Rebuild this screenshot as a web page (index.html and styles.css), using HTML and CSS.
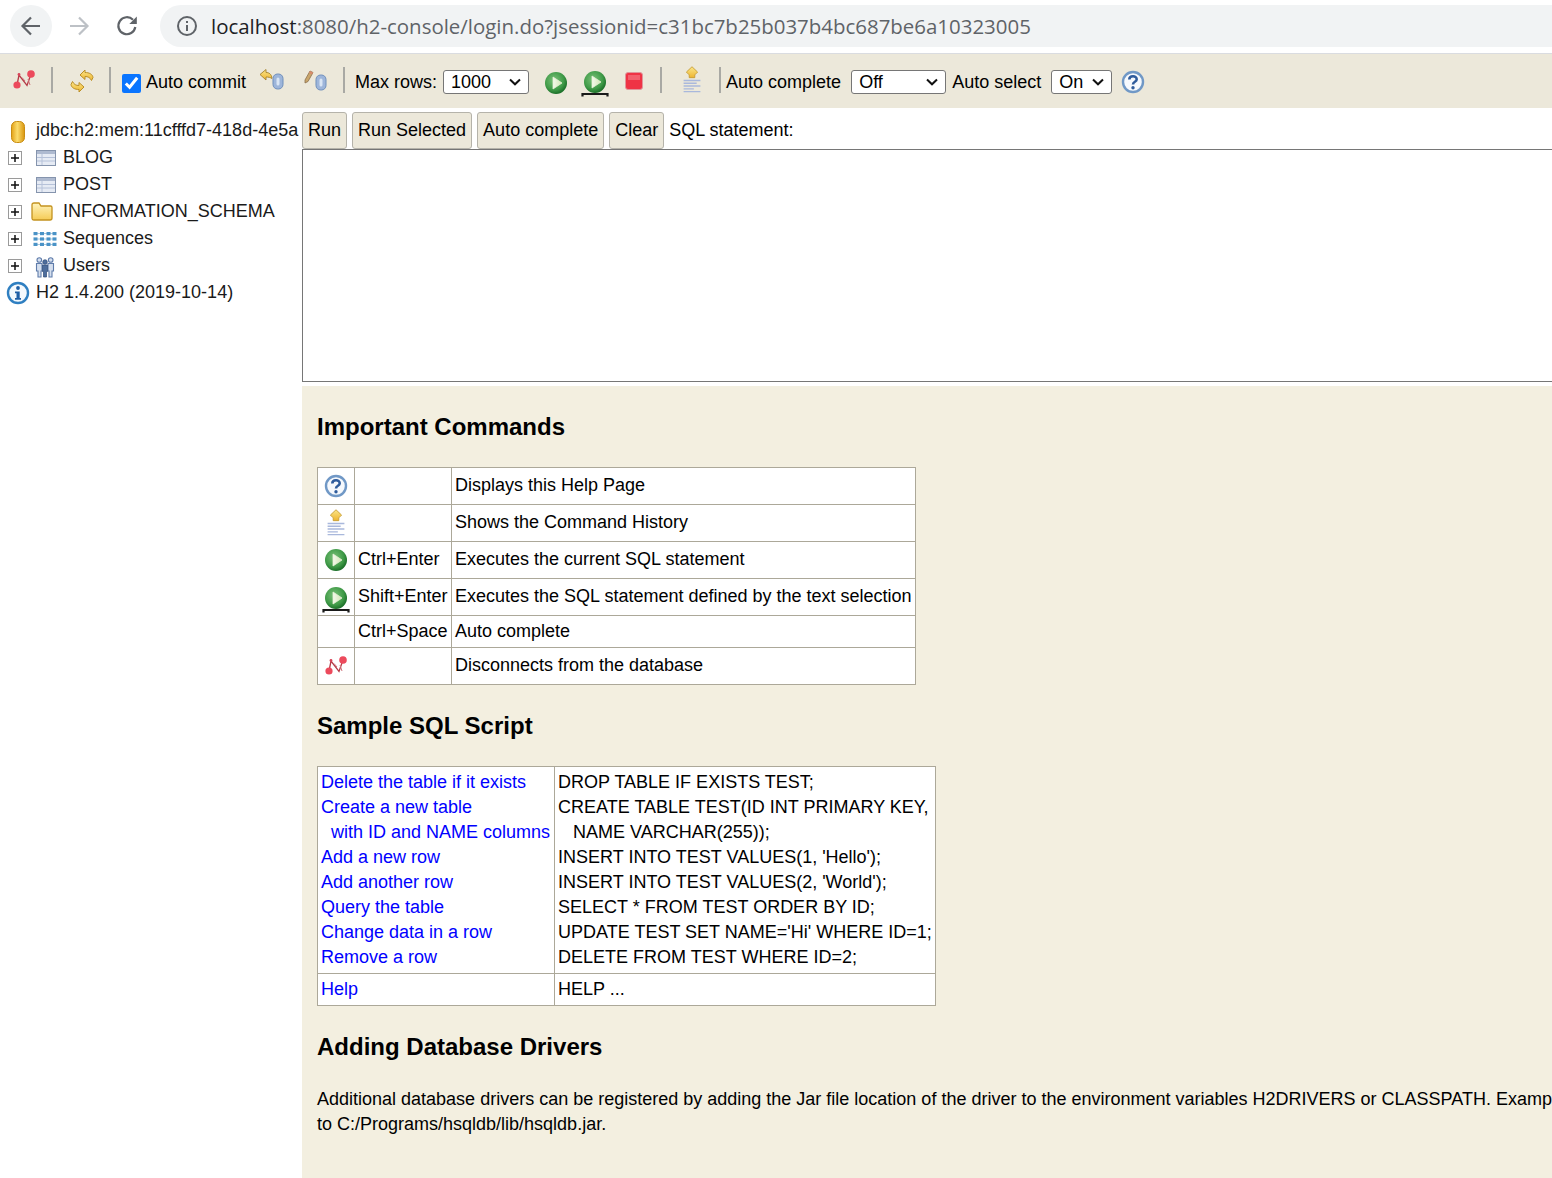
FILE: index.html
```html
<!DOCTYPE html>
<html lang="en">
<head>
<meta charset="utf-8">
<title>H2 Console</title>
<link rel="stylesheet" href="styles.css">
</head>
<body>
<svg class="defs" width="0" height="0" aria-hidden="true">
  <defs>
    <radialGradient id="gr" cx="42%" cy="38%" r="62%"><stop offset="0" stop-color="#7cc27a"/><stop offset=".7" stop-color="#3f9a47"/><stop offset="1" stop-color="#1c7029"/></radialGradient>
    <linearGradient id="tri" x1="0" x2="1" y1="0" y2="0"><stop offset="0" stop-color="#f5f9ec"/><stop offset="1" stop-color="#d2e6b4"/></linearGradient>
    <linearGradient id="cyl" x1="0" x2="1" y1="0" y2="0"><stop offset="0" stop-color="#e3a217"/><stop offset=".45" stop-color="#fbdc6c"/><stop offset="1" stop-color="#d9960f"/></linearGradient>
    <linearGradient id="fold" x1="0" x2="0" y1="0" y2="1"><stop offset="0" stop-color="#fff4bd"/><stop offset="1" stop-color="#f5cb55"/></linearGradient>
    <linearGradient id="gold" x1="0" x2="0" y1="0" y2="1"><stop offset="0" stop-color="#fbe68a"/><stop offset="1" stop-color="#eeb52f"/></linearGradient>
    <symbol id="i-disc" viewBox="0 0 24 24">
      <path d="M4 17 L6 7 L14 17.500 L18 6" fill="none" stroke="#b53a46" stroke-width="1.300"/>
      <path d="M9 9.500 L12 13 M15 11 L17 17" fill="none" stroke="#d0737c" stroke-width="1"/>
      <circle cx="4" cy="17" r="3.600" fill="#ec4a5c"/><circle cx="18" cy="6" r="3.800" fill="#ec4a5c"/><circle cx="6" cy="6.500" r="1.400" fill="#d8465a"/>
    </symbol>
    <symbol id="i-refresh" viewBox="0 0 24 24">
      <path d="M10 6 L15 1 V3.500 C19 3.500 22.500 5 23 8.500 L21.500 11.500 C20 8.500 18 7.500 15 7.500 V10.500 Z" fill="url(#gold)" stroke="#bb8f28" stroke-width="1"/>
      <path d="M14 18 L9 23 V20.500 C5 20.500 1.500 19 1 15.500 L2.500 12.500 C4 15.500 6 16.500 9 16.500 V13.500 Z" fill="url(#gold)" stroke="#bb8f28" stroke-width="1"/>
    </symbol>
    <symbol id="i-rollback" viewBox="0 0 26 22">
      <path d="M1 5.500 L7 .5 V3.500 C10 3.500 12.500 5 13 9.500 C11.500 8.500 9.500 8 7 8 V11 Z" fill="url(#gold)" stroke="#a5822c" stroke-width=".9"/>
      <rect x="14" y="5" width="10" height="15" rx="4.500" fill="#9db5da" stroke="#6f8fbb"/><rect x="17.500" y="8.500" width="3" height="8" rx="1.500" fill="#d9e5f4"/>
    </symbol>
    <symbol id="i-commit" viewBox="0 0 26 22">
      <path d="M2 10 L7 1 L10 2.500 L5 11.500 L2 13 Z" fill="#c9a66b" stroke="#8a6f4c" stroke-width=".8"/>
      <path d="M7 1 L10 2.500 L9 4.500 L6 3 Z" fill="#d98a6b"/>
      <rect x="13" y="5" width="10" height="15" rx="4.500" fill="#9db5da" stroke="#6f8fbb"/><rect x="16.500" y="8.500" width="3" height="8" rx="1.500" fill="#d9e5f4"/>
    </symbol>
    <symbol id="i-run" viewBox="0 0 24 24">
      <circle cx="12" cy="12" r="11" fill="url(#gr)"/>
      <path d="M9 6 L18 12 L9 18 Z" fill="url(#tri)" stroke="#e6f0d6" stroke-width=".8"/>
    </symbol>
    <symbol id="i-runsel" viewBox="0 0 28 28">
      <circle cx="14" cy="12" r="11" fill="url(#gr)"/>
      <path d="M11 6 L20 12 L11 18 Z" fill="url(#tri)" stroke="#e6f0d6" stroke-width=".8"/>
      <path d="M1.500 26.500 V24 H26.500 V26.500" fill="none" stroke="#1a1a1a" stroke-width="2.200"/>
    </symbol>
    <symbol id="i-stop" viewBox="0 0 18 18">
      <rect x=".5" y=".5" width="17" height="17" rx="2.500" fill="#ef3345" stroke="#e0969c"/>
      <rect x="3" y="3" width="12" height="5" fill="#f3606d"/>
    </symbol>
    <symbol id="i-hist" viewBox="0 0 20 30">
      <path d="M10 .8 L16 6.500 L13 9.500 V12.500 H7 V9.500 L4 6.500 Z" fill="url(#gold)" stroke="#c39a30" stroke-width=".9"/>
      <path d="M1 15.500 H19 M1 18.500 H15 M1 21.500 H19 M1 24.500 H12 M1 27.500 H19" stroke="#a9b8dc" stroke-width="1.500" fill="none"/>
    </symbol>
    <symbol id="i-help" viewBox="0 0 24 24">
      <circle cx="12" cy="12" r="10" fill="#f6f9fd" stroke="#7098c6" stroke-width="2.400"/>
      <path d="M8.300 9.500 C8.300 5.300 15.700 5.300 15.700 9.300 C15.700 12 12 11.500 12 14.500" fill="none" stroke="#2f5c9c" stroke-width="2.600"/>
      <circle cx="12" cy="17.800" r="1.700" fill="#2f5c9c"/>
    </symbol>
    <symbol id="i-db" viewBox="0 0 16 24">
      <rect x="1.500" y="1.500" width="13" height="21" rx="5" fill="url(#cyl)" stroke="#c98d12"/>
    </symbol>
    <symbol id="i-plus" viewBox="0 0 14 14">
      <rect x=".5" y=".5" width="13" height="13" fill="#fff" stroke="#9a9a9a"/>
      <path d="M3 7 H11 M7 3 V11" stroke="#111" stroke-width="1.500"/>
    </symbol>
    <symbol id="i-table" viewBox="0 0 20 16">
      <rect x=".5" y=".5" width="19" height="15" fill="#e6ebf4" stroke="#8594ad"/>
      <rect x="1" y="1" width="18" height="3" fill="#aebad0"/>
      <path d="M6 4 V15 M1 7.500 H19 M1 11 H19" stroke="#b6c2d9" stroke-width="1"/>
    </symbol>
    <symbol id="i-folder" viewBox="0 0 22 19">
      <path d="M1 16 V3 Q1 1 3 1 H8 L10 4 H19.500 Q21 4 21 5.500 V16 Q21 18 19 18 H3 Q1 18 1 16 Z" fill="url(#fold)" stroke="#c4931f" stroke-width="1.300"/>
    </symbol>
    <symbol id="i-seq" viewBox="0 0 24 16">
      <path d="M3 2.500 H21 M3 8 H21 M3 13.500 H21" stroke="#a8c8de" stroke-width="1"/>
      <g fill="#4a93c7"><rect x="0.500" y="1" width="4" height="3.200"/><rect x="7" y="1" width="4" height="3.200"/><rect x="13.500" y="1" width="4" height="3.200"/><rect x="19.500" y="1" width="4" height="3.200"/><rect x="0.500" y="6.400" width="4" height="3.200"/><rect x="7" y="6.400" width="4" height="3.200"/><rect x="13.500" y="6.400" width="4" height="3.200"/><rect x="19.500" y="6.400" width="4" height="3.200"/><rect x="0.500" y="11.800" width="4" height="3.200"/><rect x="7" y="11.800" width="4" height="3.200"/><rect x="13.500" y="11.800" width="4" height="3.200"/><rect x="19.500" y="11.800" width="4" height="3.200"/></g>
    </symbol>
    <symbol id="i-users" viewBox="0 0 20 22">
      <g fill="#d5dfee" stroke="#5f7cab" stroke-width="1.100"><circle cx="4.300" cy="4" r="2.300"/><circle cx="15.700" cy="4" r="2.300"/><path d="M1.500 7.500 H7 V15 H6 V21 H3 V15 H1.500 Z"/><path d="M13 7.500 H18.500 V15 H17 V21 H14 V15 H13 Z"/></g>
      <g fill="#4d6d9c" stroke="#2f4c78" stroke-width=".7"><circle cx="10" cy="6" r="2.300"/><path d="M7.500 9 H12.500 V15.500 H11.500 V21 H8.500 V15.500 H7.500 Z"/></g>
    </symbol>
    <symbol id="i-info" viewBox="0 0 24 24">
      <circle cx="12" cy="12" r="10" fill="#f4f9fd" stroke="#2f7fc1" stroke-width="2.400"/>
      <circle cx="12" cy="7" r="1.900" fill="#1f5fa5"/>
      <path d="M9 10.500 H13.700 V17 H15 V18.800 H9 V17 H10.500 V12.300 H9 Z" fill="#1f5fa5"/>
    </symbol>
  </defs>
</svg>

<header class="browser">
  <button class="nav-btn nav-back" type="button" aria-label="Back">
    <svg width="24" height="24" viewBox="0 0 24 24"><path d="M21 12 H4 M12 3.500 L3.500 12 L12 20.500" fill="none" stroke="#5f6368" stroke-width="2.200"/></svg>
  </button>
  <button class="nav-btn" type="button" aria-label="Forward">
    <svg width="24" height="24" viewBox="0 0 24 24"><path d="M3 12 H20 M12 3.500 L20.500 12 L12 20.500" fill="none" stroke="#bdc1c6" stroke-width="2.200"/></svg>
  </button>
  <button class="nav-btn" type="button" aria-label="Reload">
    <svg width="24" height="24" viewBox="0 0 24 24"><path d="M20.300 13 A8.500 8.500 0 1 1 18 5.800" fill="none" stroke="#5f6368" stroke-width="2.200"/><path d="M21.800 2.500 V10 H14.300 Z" fill="#5f6368"/></svg>
  </button>
  <div class="omnibox">
    <svg class="omni-info" width="22" height="22" viewBox="0 0 22 22"><circle cx="11" cy="11" r="9" fill="none" stroke="#5f6368" stroke-width="2"/><rect x="10" y="10" width="2" height="6" fill="#5f6368"/><rect x="10" y="6" width="2" height="2" fill="#5f6368"/></svg>
    <span class="url"><span class="url-host">localhost</span>:8080/h2-console/login.do?jsessionid=c31bc7b25b037b4bc687be6a10323005</span>
  </div>
</header>

<nav class="toolbar">
  <svg class="ico tb-disc"><use href="#i-disc"/></svg>
  <span class="sep sep-a"></span>
  <svg class="ico tb-refresh"><use href="#i-refresh"/></svg>
  <span class="sep sep-b"></span>
  <label class="check"><input type="checkbox" checked>Auto commit</label>
  <svg class="ico tb-rollback"><use href="#i-rollback"/></svg>
  <svg class="ico tb-commit"><use href="#i-commit"/></svg>
  <span class="sep sep-c"></span>
  <span class="lbl">Max rows:</span>
  <select class="sel sel-rows"><option>1000</option></select>
  <svg class="ico tb-run"><use href="#i-run"/></svg>
  <svg class="ico tb-runsel"><use href="#i-runsel"/></svg>
  <svg class="ico tb-stop"><use href="#i-stop"/></svg>
  <span class="sep sep-d"></span>
  <svg class="ico tb-hist"><use href="#i-hist"/></svg>
  <span class="sep sep-e"></span>
  <span class="lbl lbl-ac">Auto complete</span>
  <select class="sel sel-ac"><option>Off</option></select>
  <span class="lbl lbl-as">Auto select</span>
  <select class="sel sel-as"><option>On</option></select>
  <svg class="ico tb-help"><use href="#i-help"/></svg>
</nav>

<div class="main">
  <aside class="tree">
    <div class="node"><svg class="ico n-db"><use href="#i-db"/></svg><span class="n-root">jdbc:h2:mem:11cfffd7-418d-4e5a</span></div>
    <div class="node"><svg class="ico n-plus"><use href="#i-plus"/></svg><span class="n-slot"><svg class="ico n-table"><use href="#i-table"/></svg></span><span>BLOG</span></div>
    <div class="node"><svg class="ico n-plus"><use href="#i-plus"/></svg><span class="n-slot"><svg class="ico n-table"><use href="#i-table"/></svg></span><span>POST</span></div>
    <div class="node"><svg class="ico n-plus"><use href="#i-plus"/></svg><span class="n-slot"><svg class="ico n-folder"><use href="#i-folder"/></svg></span><span>INFORMATION_SCHEMA</span></div>
    <div class="node"><svg class="ico n-plus"><use href="#i-plus"/></svg><span class="n-slot"><svg class="ico n-seq"><use href="#i-seq"/></svg></span><span>Sequences</span></div>
    <div class="node"><svg class="ico n-plus"><use href="#i-plus"/></svg><span class="n-slot"><svg class="ico n-users"><use href="#i-users"/></svg></span><span>Users</span></div>
    <div class="node"><svg class="ico n-info"><use href="#i-info"/></svg><span class="n-root">H2 1.4.200 (2019-10-14)</span></div>
  </aside>

  <main class="content">
    <div class="query-bar">
      <button class="btn" type="button">Run</button>
      <button class="btn" type="button">Run Selected</button>
      <button class="btn" type="button">Auto complete</button>
      <button class="btn" type="button">Clear</button>
      <span class="q-label">SQL statement:</span>
    </div>
    <div class="editor"></div>
    <section class="help">
      <h3 class="h-first">Important Commands</h3>
      <table class="grid cmd">
        <tr class="r37"><td class="c-ico"><svg class="ico t-help"><use href="#i-help"/></svg></td><td class="c-key"></td><td>Displays this Help Page</td></tr>
        <tr class="r37"><td class="c-ico"><svg class="ico t-hist"><use href="#i-hist"/></svg></td><td class="c-key"></td><td>Shows the Command History</td></tr>
        <tr class="r37"><td class="c-ico"><svg class="ico t-run"><use href="#i-run"/></svg></td><td class="c-key">Ctrl+Enter</td><td>Executes the current SQL statement</td></tr>
        <tr class="r37"><td class="c-ico"><svg class="ico t-runsel"><use href="#i-runsel"/></svg></td><td class="c-key">Shift+Enter</td><td>Executes the SQL statement defined by the text selection</td></tr>
        <tr class="r32"><td class="c-ico"></td><td class="c-key">Ctrl+Space</td><td>Auto complete</td></tr>
        <tr class="r37"><td class="c-ico"><svg class="ico t-disc"><use href="#i-disc"/></svg></td><td class="c-key"></td><td>Disconnects from the database</td></tr>
      </table>
      <h3 class="h-sample">Sample SQL Script</h3>
      <table class="grid sample">
        <tr>
          <td class="c-links">
            <a href="#">Delete the table if it exists</a><br>
            <a href="#">Create a new table</a><br>
            <a href="#" class="indent">with ID and NAME columns</a><br>
            <a href="#">Add a new row</a><br>
            <a href="#">Add another row</a><br>
            <a href="#">Query the table</a><br>
            <a href="#">Change data in a row</a><br>
            <a href="#">Remove a row</a>
          </td>
          <td class="c-code">DROP TABLE IF EXISTS TEST;<br>
            CREATE TABLE TEST(ID INT PRIMARY KEY,<br>
            <span class="indent-code">NAME VARCHAR(255));</span><br>
            INSERT INTO TEST VALUES(1, 'Hello');<br>
            INSERT INTO TEST VALUES(2, 'World');<br>
            SELECT * FROM TEST ORDER BY ID;<br>
            UPDATE TEST SET NAME='Hi' WHERE ID=1;<br>
            DELETE FROM TEST WHERE ID=2;
          </td>
        </tr>
        <tr><td class="c-links"><a href="#">Help</a></td><td class="c-code">HELP ...</td></tr>
      </table>
      <h3 class="h-drivers">Adding Database Drivers</h3>
      <p class="drivers">Additional database drivers can be registered by adding the Jar file location of the driver to the environment variables H2DRIVERS or CLASSPATH. Example (Windows): to add the database driver library C:/Programs/hsqldb/lib/hsqldb.jar, set the environment variable H2DRIVERS<br>to C:/Programs/hsqldb/lib/hsqldb.jar.</p>
    </section>
  </main>
</div>
</body>
</html>
```

FILE: styles.css
```css
* { box-sizing: border-box; }
html, body { margin: 0; padding: 0; height: 100%; overflow: hidden; }
body { width: 1552px; height: 1178px; font-family: "Liberation Sans", Arial, sans-serif; font-size: 18px; color: #000; background: #fff; display: flex; flex-direction: column; }
.defs { position: absolute; }
.ico { display: block; flex: none; }

.browser { height: 54px; flex: none; display: flex; align-items: center; border-bottom: 1px solid #dadce0; padding: 0 0 2px 10px; background: #fff; }
.nav-btn { width: 42px; height: 42px; border: 0; background: none; border-radius: 50%; padding: 0; margin-right: 6px; display: flex; align-items: center; justify-content: center; }
.nav-back { background: #f1f3f4; }
.omnibox { flex: 1; height: 42px; margin-left: 6px; background: #f1f3f4; border-radius: 21px 0 0 21px; display: flex; align-items: center; padding-left: 16px; }
.omni-info { margin-right: 13px; }
.url { font-family: "Open Sans", sans-serif; font-size: 20.450px; color: #5f6368; white-space: nowrap; }
.url-host { color: #202124; }

.toolbar { height: 54px; flex: none; background: #ece8da; display: flex; align-items: center; padding: 2px 0 0 13px; white-space: nowrap; }
.sep { width: 2px; height: 26px; margin-bottom: 4px; background: #a9a9a4; flex: none; }
.tb-disc { width: 24px; height: 24px; margin-bottom: 4px; }
.sep-a { margin-left: 14px; }
.tb-refresh { width: 24px; height: 24px; margin-left: 17px; margin-bottom: 3px; }
.sep-b { margin-left: 15px; }
.check { display: flex; align-items: center; margin-left: 11px; }
.check input { width: 19px; height: 19px; margin: 2px 5px 0 0; accent-color: #0a75ff; }
.tb-rollback { width: 26px; height: 22px; margin: 0 0 4px 13px; }
.tb-commit { width: 26px; height: 22px; margin: 0 0 2px 18px; }
.sep-c { margin-left: 14px; }
.lbl { margin-left: 10px; }
.lbl-ac { margin-left: 5px; }
.sel { appearance: none; -webkit-appearance: none; height: 24px; font-family: "Liberation Sans", Arial, sans-serif; font-size: 18px; border: 1px solid #767676; border-radius: 3px; padding: 0 0 0 7px; color: #000; background: #fff url("data:image/svg+xml,%3Csvg xmlns='http://www.w3.org/2000/svg' width='12' height='8' viewBox='0 0 12 8'%3E%3Cpath d='M1 1.500 L6 6.300 L11 1.500' fill='none' stroke='%23111' stroke-width='2'/%3E%3C/svg%3E") no-repeat right 7px center; }
.sel-rows { width: 86px; margin-left: 6px; }
.tb-run { width: 24px; height: 24px; margin-left: 15px; margin-top: 1px; }
.tb-runsel { width: 28px; height: 28px; margin-left: 13px; margin-top: 4px; }
.tb-stop { width: 18px; height: 18px; margin-left: 16px; margin-bottom: 2px; }
.sep-d { margin-left: 17px; }
.tb-hist { width: 20px; height: 28px; margin-left: 20px; margin-bottom: 4px; }
.sep-e { margin-left: 17px; }
.sel-ac { width: 95px; margin-left: 10px; }
.lbl-as { margin-left: 6px; }
.sel-as { width: 61px; margin-left: 10px; }
.tb-help { width: 24px; height: 24px; margin-left: 9px; }

.main { flex: 1; display: flex; min-height: 0; }
.tree { width: 302px; flex: none; padding-top: 9px; white-space: nowrap; color: #1a1a1a; }
.node { height: 27px; display: flex; align-items: center; }
.n-db { width: 16px; height: 24px; margin-left: 10px; margin-right: 10px; margin-top: 3px; }
.n-info { width: 24px; height: 24px; margin-left: 6px; margin-right: 6px; }
.n-plus { width: 14px; height: 14px; margin-left: 8px; }
.n-slot { width: 41px; display: flex; justify-content: center; }
.n-table { width: 20px; height: 16px; margin-left: 6px; }
.n-folder { width: 22px; height: 19px; margin-left: 1px; margin-right: 2px; }
.n-seq { width: 24px; height: 16px; margin-left: 4px; }
.n-users { width: 20px; height: 22px; margin-left: 4px; margin-top: 2px; }

.content { flex: 1; min-width: 0; display: flex; flex-direction: column; }
.query-bar { height: 41px; flex: none; display: flex; align-items: flex-end; gap: 5px; white-space: nowrap; }
.btn { height: 37px; padding: 0 5px; font-family: "Liberation Sans", Arial, sans-serif; font-size: 18px; color: #000; background: #ece8da; border: 1px solid #b5b3aa; border-radius: 3px; }
.q-label { align-self: center; margin-top: 3px; }
.editor { height: 233px; flex: none; border: 1px solid #767676; border-right: 0; background: #fff; margin-bottom: 4px; }
.help { flex: 1; background: #f3efe0; padding-left: 15px; overflow: hidden; }
h3 { font-size: 24px; font-weight: bold; margin: 0; line-height: 28px; }
.h-first { margin-top: 27px; margin-bottom: 26px; }
.h-sample { margin-top: 27px; margin-bottom: 26px; }
.h-drivers { margin-top: 27px; margin-bottom: 26px; }
.grid { border-collapse: collapse; background: #fff; }
.grid td { border: 1px solid #aca899; padding: 0 3px; vertical-align: middle; white-space: nowrap; line-height: 21px; }
.r37 { height: 37px; }
.r32 { height: 32px; }
.cmd td { vertical-align: top; padding-top: 7px; }
.cmd .r32 td { padding-top: 5px; }
.cmd .c-ico { width: 37px; padding: 0; vertical-align: middle; }
.cmd .c-key { width: 97px; }
.c-ico .ico { margin: 0 auto; }
.t-help, .t-run { width: 24px; height: 24px; }
.t-hist { width: 20px; height: 28px; }
.cmd .t-runsel { width: 28px; height: 28px; margin-top: 5px; }
.cmd .t-disc { width: 24px; height: 24px; margin-left: 7px; }
.sample td { vertical-align: top; line-height: 25px; padding: 3px 3px; }
.sample .c-links { padding-right: 4px; }
a { color: #0000ff; text-decoration: none; }
.indent { margin-left: 10px; }
.indent-code { margin-left: 15px; }
.drivers { margin: 0; line-height: 25px; white-space: nowrap; color: #000; }
```
